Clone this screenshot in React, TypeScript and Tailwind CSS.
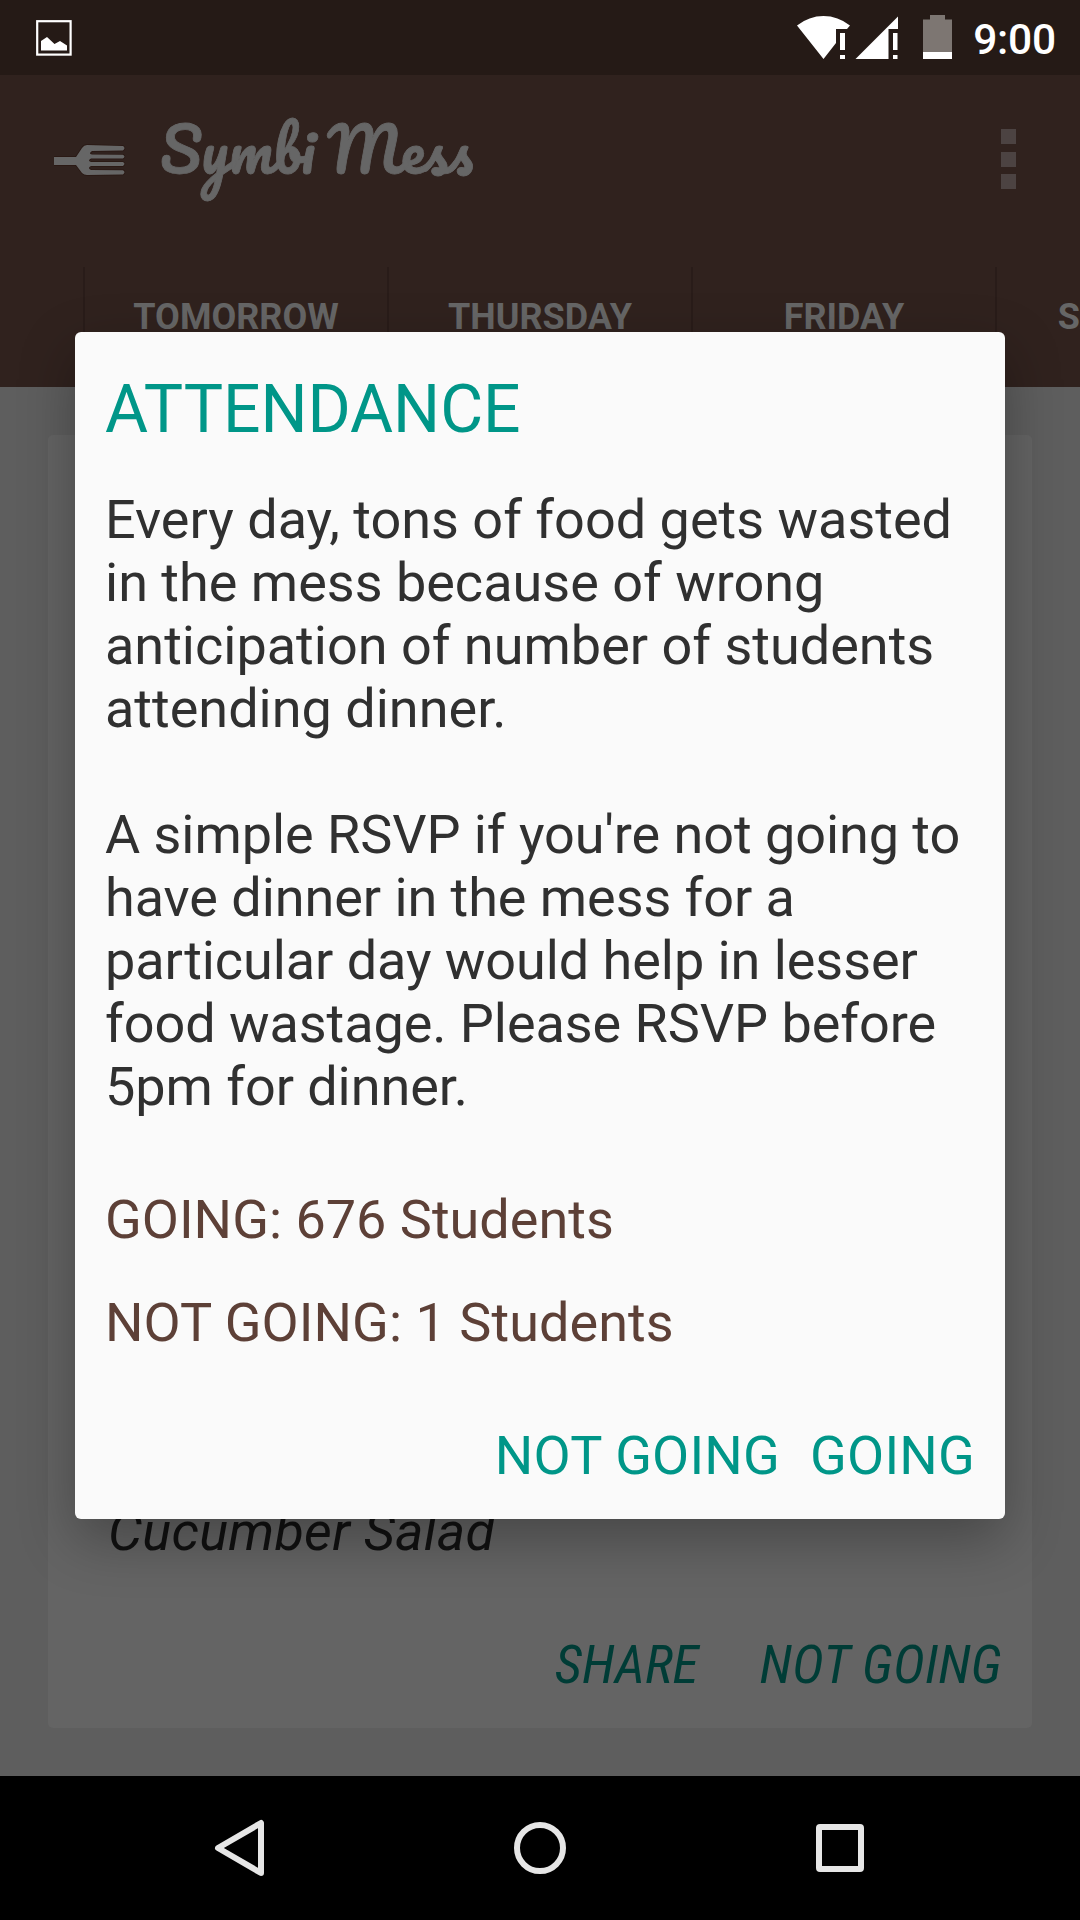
function StatusBar() {
  return (
    <div className="flex h-[75px] items-start bg-[#251a16] pl-9">
      <svg className="mt-5" width="36" height="36" viewBox="0 0 36 36">
        <rect x="1.2" y="1.2" width="33.4" height="33.4" fill="none" stroke="#fff" strokeWidth="2.2" />
        <path d="M5 30.500V21L11 17L18.500 24L24 21L31 25.500V30.500Z" fill="#fff" />
      </svg>
      <svg className="ml-auto mt-3" width="160" height="50" viewBox="796 12 160 50">
        <path d="M797 25.500Q809 16 823.500 16T850 25.500L847 29H836V43L823.500 59Z" fill="#fff" />
        <path d="M840 33h5v17h-5zM840 55h5v4h-5z" fill="#fff" />
        <path d="M855.500 59L898 16.500V29H888.500V59Z" fill="#fff" />
        <path d="M893 33h4.500v17h-4.500zM893 55h4.500v4h-4.500z" fill="#fff" />
        <path d="M930 15h15v4.500h7v33h-29v-33h7z" fill="#7d7672" />
        <path d="M923 52h29v7h-29z" fill="#fff" />
      </svg>
      <span className="ml-[16px] mr-[24px] mt-[15px] w-[84px] text-right text-[42.500px] leading-[50px] font-medium tracking-[-0.200px] text-white">
        9:00
      </span>
    </div>
  );
}

function Header() {
  return (
    <header className="flex h-[312px] flex-col bg-[#30221e] text-[#666]">
      <div className="flex h-[192px] items-start">
        <svg className="ml-[54px] mt-[68px]" width="74" height="40" viewBox="54 143 74 40">
          <path
            d="M54 157h22l6-9q2-3 5-3l36 1q3 2 0 4.500l-31 .5q-4 2.500 0 3.500l31 .2q3 1.800 0 3.800h-32q-4 2 0 3.600h32q3 1.800 0 3.800h-32q-4 2 0 4l32 .3q3 2 0 4.200l-36 .6q-3 0-5-2l-6-8H54z"
            fill="#666"
            stroke="#281712"
            strokeWidth="1.500"
            paintOrder="stroke"
          />
        </svg>
        <svg className="ml-6 mt-[15px] overflow-visible" width="340" height="140" viewBox="152 90 340 140">
          <text
            x="160"
            y="173.900"
            fill="#666"
            stroke="#666"
            strokeWidth="0.8"
            textLength="313"
            lengthAdjust="spacingAndGlyphs"
            className="font-['Pacifico',cursive] text-[59.500px] font-normal [word-spacing:-3px]"
          >
            Symbi Mess
          </text>
        </svg>
        <div className="ml-auto mr-16 mt-[54px] flex flex-col gap-[7.500px]">
          <i className="size-[15px] bg-[#4c4342]" />
          <i className="size-[15px] bg-[#4c4342]" />
          <i className="size-[15px] bg-[#4c4342]" />
        </div>
      </div>
      <nav className="flex h-[120px] overflow-hidden pl-[83px] text-[36px] leading-[42px] font-bold">
        {["TOMORROW", "THURSDAY", "FRIDAY", "SATURDAY"].map((day) => (
          <div key={day} className="w-[304px] shrink-0 border-l-2 border-[#291c19] pt-[29px] text-center">
            {day}
          </div>
        ))}
      </nav>
    </header>
  );
}

function MenuCard() {
  return (
    <main className="flex h-[1389px] flex-col bg-[#5e5e5e] px-12 pt-12 pb-12">
      <section className="flex flex-1 flex-col justify-end rounded-[5px] bg-[#646464] pl-[60px] pr-[30px] italic">
        <p className="text-[54px] leading-[63px] tracking-[0.250px] text-[#111]">Cucumber Salad</p>
        <div className="mt-[70px] mb-[32px] flex justify-end gap-[61px] text-[54px] leading-[63px] tracking-[0.200px] text-[#003c36] font-['Roboto_Condensed','Roboto',sans-serif] [font-stretch:75%]">
          <span className="tracking-[-0.100px]">SHARE</span>
          <span>NOT GOING</span>
        </div>
      </section>
    </main>
  );
}

function NavigationBar() {
  return (
    <div className="flex h-36 items-center bg-black">
      <svg width="1080" height="144" viewBox="0 0 1080 144" fill="none" stroke="#e6e6e6" strokeWidth="6" strokeLinejoin="round">
        <path d="M261 47V97L218 72Z" />
        <circle cx="540" cy="72" r="23" />
        <rect x="819" y="51" width="42" height="42" rx="1" />
      </svg>
    </div>
  );
}

function AttendanceDialog() {
  return (
    <div className="absolute top-[332px] left-[75px] flex h-[1187px] w-[930px] flex-col rounded-[6px] bg-[#fafafa] px-[30px] pt-[39px] text-[54px] leading-[63px] shadow-[0_20px_56px_rgba(0,0,0,0.3)]">
      <h1 className="text-[66px] leading-[78px] tracking-[-0.050px] text-[#009688]">ATTENDANCE</h1>
      <p className="mt-[39px] whitespace-pre text-[#303030]">
        {"Every day, tons of food gets wasted\nin the mess because of wrong\nanticipation of number of students\nattending dinner.\n\n"}
        <span className="tracking-[-0.060px]">
          {"A simple RSVP if you're not going to\nhave dinner in the mess for a\nparticular day would help in lesser\nfood wastage. Please RSVP before\n5pm for dinner."}
        </span>
      </p>
      <p className="mt-[70px] text-[#5d4037]">GOING: 676 Students</p>
      <p className="mt-10 tracking-[0.050px] text-[#5d4037]">NOT GOING: 1 Students</p>
      <div className="mt-[70px] flex justify-end gap-[30px] tracking-[0.200px] text-[#009688]">
        <button>NOT GOING</button>
        <button>GOING</button>
      </div>
    </div>
  );
}

export default function App() {
  return (
    <div className="relative h-[1920px] w-[1080px] overflow-hidden font-['Roboto',sans-serif]">
      <StatusBar />
      <Header />
      <MenuCard />
      <NavigationBar />
      <AttendanceDialog />
    </div>
  );
}
